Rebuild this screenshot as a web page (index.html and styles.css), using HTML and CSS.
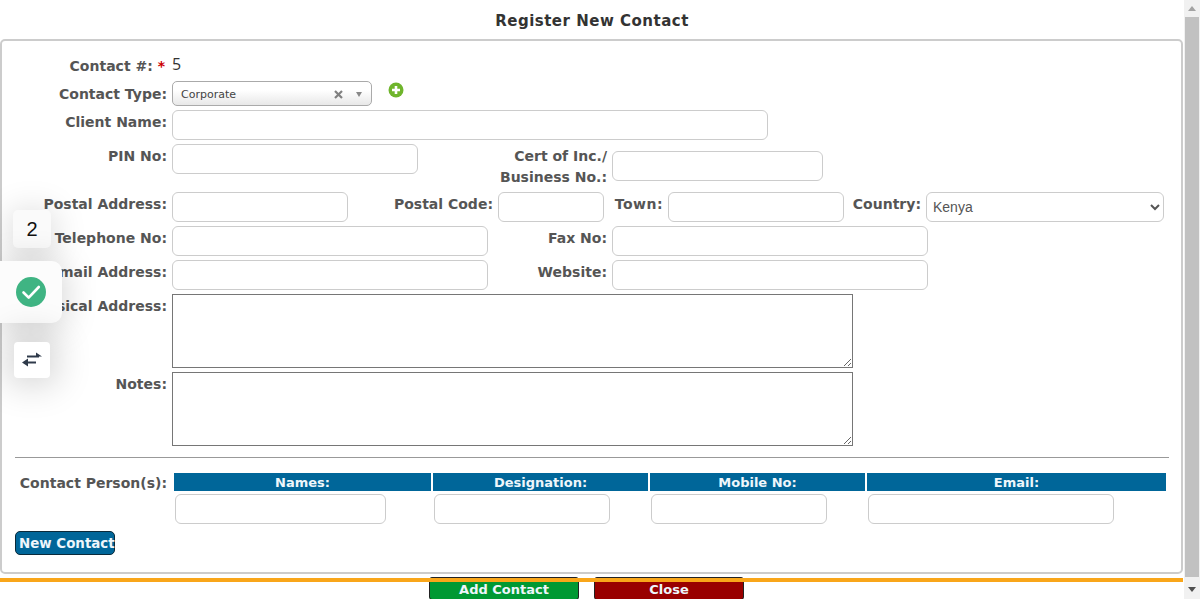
FILE: index.html
```html
<!DOCTYPE html>
<html>
<head>
  <title>Register New Contact</title>
  <link rel="stylesheet" href="styles.css">
</head>

<body>
  <div class="page">
    <div class="main">
      <h1 class="title">Register New Contact</h1>
      <form class="box">
        <div class="row row-number">
          <label class="lbl">Contact #: <span class="req">*</span></label>
          <span class="number">5</span>
        </div>
        <div class="row row-type">
          <label class="lbl lbl-type">Contact Type:</label>
          <div class="picker">
            <span class="picker-text">Corporate</span>
            <svg class="picker-clear" width="9" height="9" viewBox="0 0 9 9">
              <path d="M1 1l7 7M8 1l-7 7" stroke="#808080" stroke-width="2.2"/>
            </svg>
            <span class="picker-arrow"></span>
          </div>
          <svg class="plus" width="16" height="16" viewBox="0 0 16 16">
            <circle cx="8" cy="8" r="7.5" fill="#6fb52c"/>
            <path d="M8 4v8M4 8h8" stroke="#fff" stroke-width="2.6"/>
          </svg>
        </div>
        <div class="row">
          <label class="lbl">Client Name:</label>
          <input class="txt w596" type="text">
        </div>
        <div class="row">
          <label class="lbl">PIN No:</label>
          <input class="txt w246" type="text">
          <label class="lbl lbl-cert">Cert of Inc./<br>Business No.:</label>
          <input class="txt w211 cert-input" type="text">
        </div>
        <div class="row">
          <label class="lbl">Postal Address:</label>
          <input class="txt w176" type="text">
          <label class="lbl lbl-code">Postal Code:</label>
          <input class="txt w106" type="text">
          <label class="lbl lbl-town">Town:</label>
          <input class="txt w176" type="text">
          <label class="lbl lbl-country">Country:</label>
          <select class="txt country"><option>Kenya</option></select>
        </div>
        <div class="row">
          <label class="lbl">Telephone No:</label>
          <input class="txt w316" type="text">
          <label class="lbl lbl-mid">Fax No:</label>
          <input class="txt w316" type="text">
        </div>
        <div class="row">
          <label class="lbl">Email Address:</label>
          <input class="txt w316" type="text">
          <label class="lbl lbl-mid">Website:</label>
          <input class="txt w316" type="text">
        </div>
        <div class="row">
          <label class="lbl">Physical Address:</label>
          <textarea class="area"></textarea>
        </div>
        <div class="row">
          <label class="lbl">Notes:</label>
          <textarea class="area"></textarea>
        </div>
        <hr class="rule">
        <div class="persons">
          <label class="lbl lbl-persons">Contact Person(s):</label>
          <div class="grid">
            <div class="head">Names:</div>
            <div class="head">Designation:</div>
            <div class="head">Mobile No:</div>
            <div class="head">Email:</div>
            <div class="cell"><input class="txt w211" type="text"></div>
            <div class="cell"><input class="txt w176" type="text"></div>
            <div class="cell"><input class="txt w176" type="text"></div>
            <div class="cell"><input class="txt w246" type="text"></div>
          </div>
        </div>
        <button class="btn-new" type="button">New Contact</button>
      </form>
      <div class="footer">
        <button class="btn-foot btn-add" type="button">Add Contact</button>
        <button class="btn-foot btn-close" type="button">Close</button>
      </div>
    </div>
    <div class="scrollbar">
      <span class="arrow-up"></span>
      <div class="thumb"></div>
      <span class="arrow-down"></span>
    </div>
  </div>

  <!-- floating widget on the left -->
  <div class="float">
    <div class="float-num">2</div>
    <div class="float-check">
      <svg width="30" height="30" viewBox="0 0 30 30">
        <circle cx="15" cy="15" r="15" fill="#3fb483"/>
        <path d="M7.5 15.5l5.2 5.2L22.8 10" fill="none" stroke="#fff" stroke-width="2.6" stroke-linecap="round" stroke-linejoin="round"/>
      </svg>
    </div>
    <div class="float-swap">
      <svg width="22" height="18" viewBox="0 0 22 18">
        <path d="M6 5.5h12" stroke="#2f3a4a" stroke-width="2"/>
        <path d="M15 1.5l6 4h-6z" fill="#2f3a4a"/>
        <path d="M3 11.5h12" stroke="#2f3a4a" stroke-width="2"/>
        <path d="M7 7.5l-6 4 6 4z" fill="#2f3a4a"/>
      </svg>
    </div>
  </div>
</body>

</html>
```

FILE: styles.css
```css
html, body {
  margin: 0;
  height: 599px;
  overflow: hidden;
  background-color: #fff;
}

body {
  font-family: "DejaVu Sans", sans-serif;
  color: #555;
}

.page {
  display: flex;
  height: 599px;
}

.main {
  flex: 1;
  min-width: 0;
  display: flex;
  flex-direction: column;
}

.title {
  flex: none;
  margin: 0;
  height: 39px;
  line-height: 43px;
  text-align: center;
  font-size: 15px;
  font-weight: bold;
  letter-spacing: 0.5px;
  color: #333;
}

.box {
  flex: none;
  height: 535px;
  box-sizing: border-box;
  margin-right: 1px;
  border: 2px solid #ccc;
  border-radius: 5px;
  padding: 13px 0 0 13px;
}

.row {
  display: flex;
  align-items: flex-start;
  margin-bottom: 4px;
}

.lbl {
  flex: none;
  width: 152px;
  margin-right: 5px;
  padding-top: 4px;
  text-align: right;
  font-size: 14px;
  font-weight: bold;
  line-height: 16px;
  white-space: nowrap;
  color: #555;
}

.req {
  margin-right: 2px;
  color: #c00;
}

.row-number {
  height: 27px;
  margin-bottom: 0;
}

.number {
  font-family: "Open Sans", sans-serif;
  font-size: 16px;
  line-height: 20px;
  color: #333;
}

.row-type {
  height: 25px;
}

.lbl-type {
  padding-top: 5px;
}

.picker {
  box-sizing: border-box;
  width: 200px;
  height: 25px;
  display: flex;
  align-items: center;
  padding: 1px 9px 0 8px;
  border: 1px solid #aaa;
  border-radius: 5px;
  background: linear-gradient(#fff 35%, #e8e8e8);
  font-size: 11px;
  color: #444;
}

.picker-text {
  flex: 1;
}

.picker-clear {
  margin-right: 13px;
}

.picker-arrow {
  width: 0;
  height: 0;
  border-left: 3.5px solid transparent;
  border-right: 3.5px solid transparent;
  border-top: 5px solid #888;
}

.plus {
  margin: 1px 0 0 16px;
}

.txt {
  flex: none;
  box-sizing: border-box;
  height: 30px;
  padding: 0 5px;
  border: 1px solid #ccc;
  border-radius: 6px;
  background-color: #fff;
  font-family: "Liberation Sans", sans-serif;
  font-size: 14px;
  color: #555;
}

.w596 { width: 596px; }
.w316 { width: 316px; }
.w246 { width: 246px; }
.w211 { width: 211px; }
.w176 { width: 176px; }
.w106 { width: 106px; }

.lbl-cert {
  width: 189px;
  padding-top: 2px;
  line-height: 21px;
}

.cert-input {
  margin-top: 7px;
}

.lbl-code { width: 145px; }
.lbl-town { width: 59px; letter-spacing: 0.5px; }
.lbl-country { width: 77px; }
.lbl-mid { width: 119px; }

.country {
  width: 238px;
  padding: 0 0 0 2px;
}

.area {
  flex: none;
  box-sizing: border-box;
  width: 681px;
  height: 74px;
  margin: 0;
  border: 1px solid #767676;
  border-radius: 0;
}

.rule {
  margin: 11px 12px 15px 0;
  border: 0;
  border-top: 1px solid #999;
}

.persons {
  display: flex;
  align-items: flex-start;
}

.lbl-persons {
  padding-top: 2px;
  margin-right: 7px;
}

.grid {
  display: grid;
  grid-template-columns: 257px 215px 215px 299px;
  column-gap: 2px;
  row-gap: 3px;
}

.head {
  height: 18px;
  line-height: 20px;
  text-align: center;
  font-size: 13px;
  font-weight: bold;
  color: #eef6fb;
  background-color: #006699;
}

.cell {
  padding-left: 1px;
  line-height: 0;
}

.btn-new {
  display: block;
  box-sizing: border-box;
  width: 100px;
  height: 24px;
  margin-top: 7px;
  padding: 0 0 0 3px;
  border: 1px solid #0a2a3a;
  border-radius: 5px;
  background-color: #006699;
  color: #eef6fb;
  font-family: "DejaVu Sans", sans-serif;
  font-size: 13.4px;
  font-weight: bold;
  white-space: nowrap;
  text-align: left;
}

.footer {
  position: relative;
  flex: none;
  height: 25px;
  box-sizing: border-box;
  display: flex;
  align-items: flex-start;
  gap: 15px;
  padding: 3px 0 0 429px;
}

/* orange line runs over the top of the buttons */
.footer::before {
  content: "";
  position: absolute;
  left: 0;
  right: 1px;
  top: 4px;
  height: 4px;
  background-color: #f9a61a;
}

.btn-foot {
  box-sizing: border-box;
  width: 150px;
  height: 23px;
  padding: 1px 0 0;
  border: 1px solid #222;
  border-radius: 3px;
  color: #eef6fb;
  font-family: "DejaVu Sans", sans-serif;
  font-size: 13px;
  font-weight: bold;
}

.btn-add {
  background-color: #009933;
}

.btn-close {
  background-color: #990000;
}

.scrollbar {
  flex: none;
  width: 16px;
  display: flex;
  flex-direction: column;
  align-items: center;
  background-color: #f1f1f1;
}

.thumb {
  width: 14px;
  flex: 1;
  background-color: #c1c1c1;
}

.arrow-up, .arrow-down {
  flex: none;
  width: 0;
  height: 0;
  border-left: 4px solid transparent;
  border-right: 4px solid transparent;
}

.arrow-up {
  margin: 6px 0;
  border-bottom: 5px solid #a3a3a3;
}

.arrow-down {
  margin: 10px 0 7px;
  border-top: 5px solid #505050;
}

.float {
  position: absolute;
  left: 0;
  top: 210px;
  width: 62px;
  height: 168px;
}

.float-num, .float-check, .float-swap {
  position: absolute;
  display: flex;
  align-items: center;
  justify-content: center;
  background-color: #fff;
  box-shadow: 0 4px 36px rgba(0, 0, 0, 0.2);
}

.float-num {
  left: 13px;
  top: 0;
  width: 38px;
  height: 38px;
  border-radius: 5px;
  background-color: #fafafa;
  font-family: "Liberation Sans", sans-serif;
  font-size: 20px;
  color: #111;
}

.float-check {
  left: 0;
  top: 51px;
  width: 62px;
  height: 62px;
  border-radius: 0 10px 10px 0;
  background-color: #fcfcfc;
}

.float-swap {
  left: 14px;
  top: 132px;
  width: 36px;
  height: 36px;
  border-radius: 4px;
  box-shadow: 0 0 40px rgba(0, 0, 0, 0.32);
}
```
